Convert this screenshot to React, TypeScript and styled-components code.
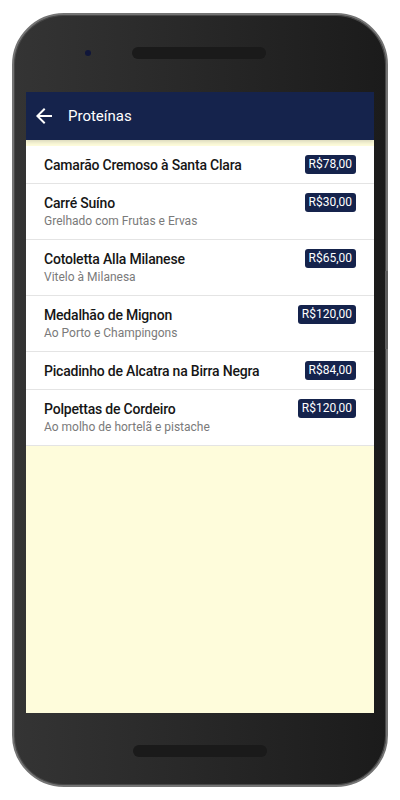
import React from 'react';
import styled, { createGlobalStyle } from 'styled-components';

type Dish = {
    name: string;
    description?: string;
    price: string;
};

const dishes: Dish[] = [
    { name: 'Camarão Cremoso à Santa Clara', price: 'R$78,00' },
    { name: 'Carré Suíno', description: 'Grelhado com Frutas e Ervas', price: 'R$30,00' },
    { name: 'Cotoletta Alla Milanese', description: 'Vitelo à Milanesa', price: 'R$65,00' },
    { name: 'Medalhão de Mignon', description: 'Ao Porto e Champingons', price: 'R$120,00' },
    { name: 'Picadinho de Alcatra na Birra Negra', price: 'R$84,00' },
    { name: 'Polpettas de Cordeiro', description: 'Ao molho de hortelã e pistache', price: 'R$120,00' },
];

const BackArrow = () => (
    <svg width="24" height="24" viewBox="0 0 24 24" fill="#ffffff">
        <path d="M20 11H7.83l5.59-5.59L12 4l-8 8 8 8 1.41-1.41L7.83 13H20v-2z" />
    </svg>
);

export default function App() {
    return (
        <>
            <GlobalStyle />
            <Page>
                <Phone>
                    <SideButton />
                    <TopBezel>
                        <Camera />
                        <Speaker />
                    </TopBezel>

                    <Screen>
                        <Toolbar>
                            <IconButton aria-label="Voltar">
                                <BackArrow />
                            </IconButton>
                            <Title>Proteínas</Title>
                        </Toolbar>

                        <List>
                            {dishes.map((dish) => (
                                <Row key={dish.name}>
                                    <Info>
                                        <Name>{dish.name}</Name>
                                        {dish.description && <Description>{dish.description}</Description>}
                                    </Info>
                                    <Price>{dish.price}</Price>
                                </Row>
                            ))}
                        </List>
                    </Screen>

                    <BottomBezel>
                        <Speaker />
                    </BottomBezel>
                </Phone>
            </Page>
        </>
    );
}

const GlobalStyle = createGlobalStyle`
    * {
        box-sizing: border-box;
    }

    body {
        margin: 0;
        background: #ffffff;
        font-family: Roboto, "Noto Sans", "Liberation Sans", sans-serif;
    }
`;

const Page = styled.div`
    width: 400px;
    height: 800px;
    padding: 13px 12px;
`;

const Phone = styled.div`
    position: relative;
    width: 376px;
    height: 774px;
    display: flex;
    flex-direction: column;
    border: 2px solid #747474;
    border-radius: 52px;
    background: linear-gradient(to right, #343434, #1b1b1b);
    box-shadow: inset 0 0 0 1px #484848;
`;

const SideButton = styled.div`
    position: absolute;
    right: -2px;
    top: 256px;
    width: 3px;
    height: 78px;
    background: #5c5c5c;
`;

const TopBezel = styled.div`
    height: 77px;
    display: flex;
    align-items: flex-start;
    padding: 32px 0 0 71px;
    gap: 41px;
`;

const BottomBezel = styled.div`
    height: 72px;
    display: flex;
    justify-content: center;
    padding-top: 32px;
`;

const Camera = styled.div`
    width: 6px;
    height: 6px;
    margin-top: 3px;
    border-radius: 50%;
    background: #10163a;
`;

const Speaker = styled.div`
    width: 134px;
    height: 12px;
    border-radius: 6px;
    background: #1a1a1a;
`;

const Screen = styled.div`
    height: 621px;
    margin: 0 12px;
    display: flex;
    flex-direction: column;
    background: #fefcdb;
    overflow: hidden;
`;

const Toolbar = styled.div`
    flex-shrink: 0;
    height: 48px;
    display: flex;
    align-items: center;
    padding-left: 6px;
    gap: 12px;
    background: #15234c;
    box-shadow: 0 2px 4px rgba(0, 0, 0, 0.15);
`;

const IconButton = styled.button`
    display: flex;
    padding: 0;
    border: none;
    background: none;
`;

const Title = styled.span`
    color: #ffffff;
    font-size: 15px;
    font-weight: 400;
`;

const List = styled.ul`
    margin: 6px 0 0;
    padding: 0;
    list-style: none;
    background: #ffffff;
`;

const Row = styled.li`
    display: flex;
    align-items: flex-start;
    justify-content: space-between;
    padding: 11px 18px 9px;
    border-bottom: 1px solid #e4e4e4;
`;

const Info = styled.div`
    display: flex;
    flex-direction: column;
    gap: 1px;
`;

const Name = styled.span`
    font-size: 14px;
    font-weight: 500;
    line-height: 17px;
    letter-spacing: -0.2px;
    color: #161616;
`;

const Description = styled.span`
    font-size: 12px;
    line-height: 17px;
    color: #7a7a7a;
`;

const Price = styled.span`
    margin-top: -2px;
    padding: 1px 4px;
    border-radius: 3px;
    background: #15234c;
    color: #ffffff;
    font-size: 12px;
    line-height: 17px;
`;
